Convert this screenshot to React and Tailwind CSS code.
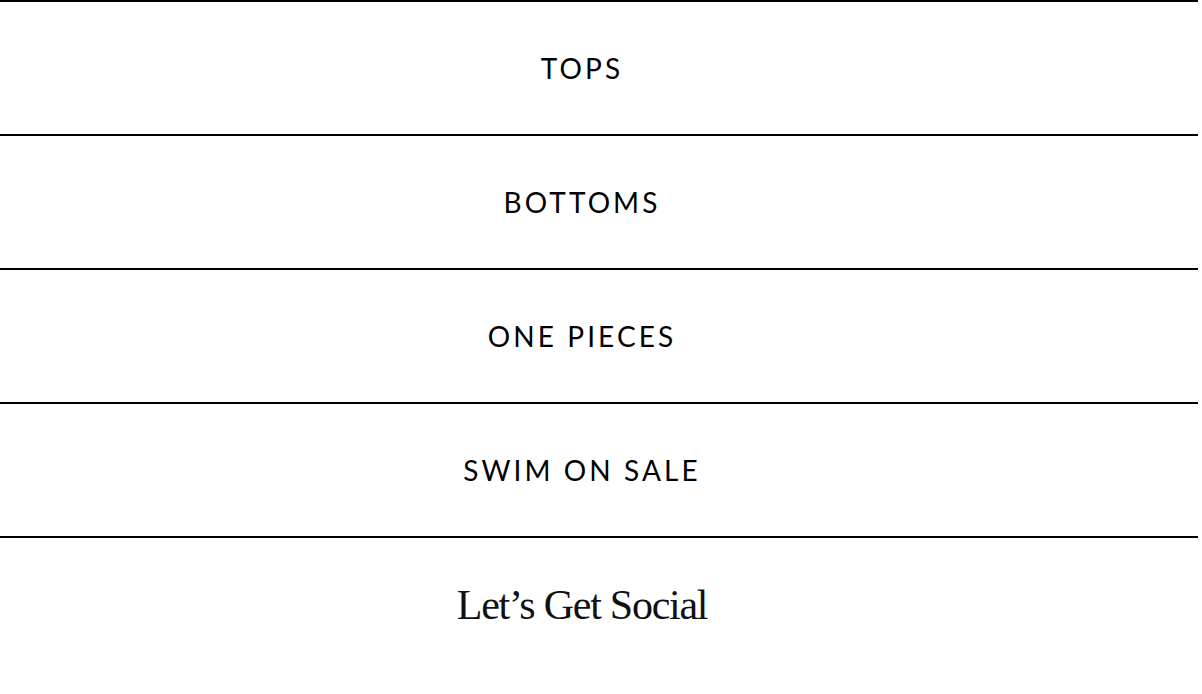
const CATEGORIES = ['TOPS', 'BOTTOMS', 'ONE PIECES', 'SWIM ON SALE'];

export default function App() {
  return (
    <div className="h-[694px] w-[1202px] overflow-hidden bg-white" style={{ fontFamily: 'Lato, "Open Sans", sans-serif' }}>
      <div className="w-[1198px]">
        {CATEGORIES.map((label) => (
          <a
            key={label}
            href="#"
            className="flex h-[134px] items-center justify-center border-t-2 border-black pr-[34px] text-[28px] font-normal tracking-[0.11em] text-black"
          >
            {label}
          </a>
        ))}
        <div className="border-t-2 border-black pr-[34px] pt-[46px] text-center">
          <h2
            className="text-[42px] leading-none tracking-[-0.03em] text-[#111]"
            style={{ fontFamily: '"Liberation Serif", "DejaVu Serif", serif' }}
          >
            Let’s Get Social
          </h2>
        </div>
      </div>
    </div>
  );
}
